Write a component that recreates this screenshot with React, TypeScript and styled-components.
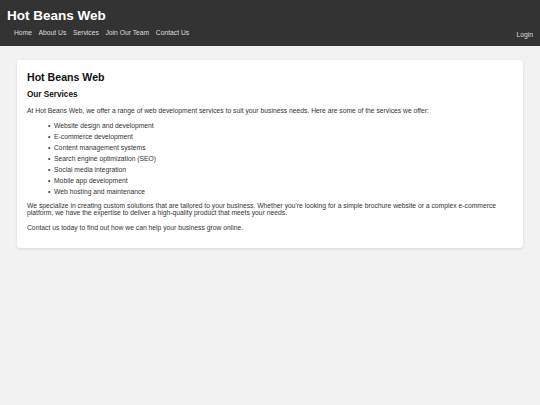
import React from "react";
import styled, { createGlobalStyle } from "styled-components";

const Global = createGlobalStyle`
  html, body { margin: 0; padding: 0; }
  body {
    background: #f2f2f2;
    font-family: "Liberation Sans", Arial, sans-serif;
    color: #333;
    font-size: 6.75px;
    min-height: 405px;
  }
`;

const Header = styled.header`
  background: #333;
  color: #fff;
  height: 46px;
  box-sizing: border-box;
  padding: 8px 7px 0 7px;
  display: flex;
  justify-content: space-between;
  align-items: flex-start;
`;

const Brand = styled.div`
  display: flex;
  flex-direction: column;
`;

const Title = styled.h1`
  margin: 0;
  font-size: 13.5px;
  line-height: 15px;
  font-weight: bold;
  color: #fff;
`;

const Nav = styled.nav`
  display: flex;
  gap: 6.6px;
  margin-top: 5px;
  padding-left: 7px;
`;

const NavLink = styled.a`
  color: #ddd;
  text-decoration: none;
  font-size: 6.75px;
  line-height: 9px;
`;

const Login = styled.a`
  color: #ddd;
  text-decoration: none;
  font-size: 6.75px;
  line-height: 9px;
  align-self: flex-end;
  margin-bottom: 7px;
`;

const Main = styled.main`
  padding: 14px 17px;
`;

const Card = styled.section`
  background: #fff;
  border-radius: 3px;
  box-shadow: 0 1px 3px rgba(0, 0, 0, 0.12);
  padding: 11px 10px 10px 10px;
`;

const CardTitle = styled.h1`
  margin: 0 0 6.5px;
  font-size: 10.6px;
  line-height: 12.6px;
  color: #111;
`;

const SubTitle = styled.h2`
  margin: 0 0 7px;
  font-size: 8.2px;
  line-height: 10px;
  color: #111;
`;

const Para = styled.p<{ $last?: boolean }>`
  margin: 0 0 ${(p) => (p.$last ? 7 : 7)}px;
  font-size: 6.75px;
  line-height: 7.5px;
`;

const List = styled.ul`
  margin: 7px 0 6px;
  padding-left: 27px;
`;

const Item = styled.li`
  font-size: 6.75px;
  line-height: 8px;
  margin-bottom: 3px;
  list-style: disc outside;
  &::marker {
    content: "•  ";
  }
  &:last-child { margin-bottom: 0; }
`;

const services = [
  "Website design and development",
  "E-commerce development",
  "Content management systems",
  "Search engine optimization (SEO)",
  "Social media integration",
  "Mobile app development",
  "Web hosting and maintenance",
];

const navItems = ["Home", "About Us", "Services", "Join Our Team", "Contact Us"];

export default function App() {
  return (
    <>
      <Global />
      <Header>
        <Brand>
          <Title>Hot Beans Web</Title>
          <Nav>
            {navItems.map((n) => (
              <NavLink key={n} href="#">{n}</NavLink>
            ))}
          </Nav>
        </Brand>
        <Login href="#">Login</Login>
      </Header>
      <Main>
        <Card>
          <CardTitle>Hot Beans Web</CardTitle>
          <SubTitle>Our Services</SubTitle>
          <Para>
            At Hot Beans Web, we offer a range of web development services to suit your business needs. Here are some of the services we offer:
          </Para>
          <List>
            {services.map((s) => (
              <Item key={s}>{s}</Item>
            ))}
          </List>
          <Para>
            We specialize in creating custom solutions that are tailored to your business. Whether you're looking for a simple brochure website or a complex e-commerce platform, we have the expertise to deliver a high-quality product that meets your needs.
          </Para>
          <Para $last>
            Contact us today to find out how we can help your business grow online.
          </Para>
        </Card>
      </Main>
    </>
  );
}
